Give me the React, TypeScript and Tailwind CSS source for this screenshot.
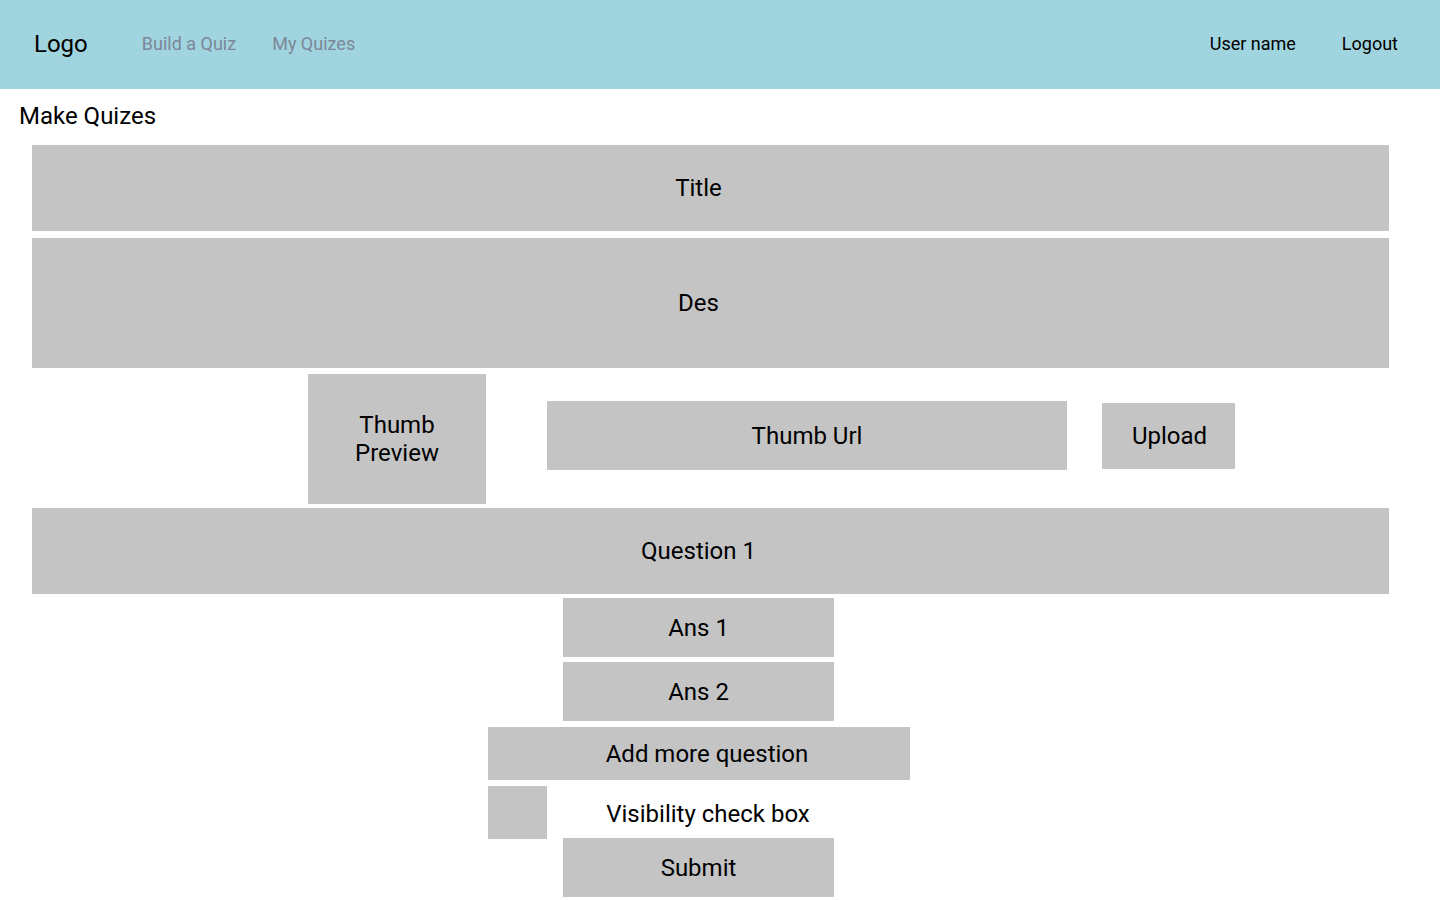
import React from "react"

const box = "bg-[#c4c4c4] flex items-center justify-center text-center text-black"

export default function App() {
  return (
    <div className="min-h-screen bg-white font-['Roboto',sans-serif] text-black">
      {/* Top bar */}
      <header className="h-[89px] bg-[#a0d4df] flex items-center px-[34px] pb-[2px]">
        <div className="text-[24px] leading-none">Logo</div>
        <nav className="flex items-center gap-[36px] ml-[54px] text-[18px] text-[#7c8797]">
          <a href="#">Build a Quiz</a>
          <a href="#">My Quizes</a>
        </nav>
        <div className="ml-auto flex items-center gap-[46px] text-[18px] pr-[8px]">
          <span>User name</span>
          <span>Logout</span>
        </div>
      </header>

      <main className="pb-4">
        <h1 className="pl-[19px] pt-[13px] text-[24px] leading-[28px]">Make Quizes</h1>

        <div className="ml-[32px] w-[1357px] mt-[15px] flex flex-col">
          <div className={`${box} h-[86px] pr-[24px] text-[24px]`}>Title</div>
          <div className={`${box} h-[130px] mt-[7px] pr-[24px] text-[24px]`}>Des</div>
        </div>

        {/* Thumbnail row */}
        <div className="flex items-start pl-[308px] mt-[6px]">
          <div className={`${box} w-[178px] h-[130px] text-[24px] leading-[28px]`}>
            Thumb
            <br />
            Preview
          </div>
          <div className={`${box} w-[520px] h-[69px] ml-[61px] mt-[27px] text-[24px]`}>Thumb Url</div>
          <div className={`${box} w-[133px] h-[66px] ml-[35px] mt-[29px] pl-[2px] text-[24px]`}>Upload</div>
        </div>

        <div className="ml-[32px] w-[1357px] mt-[4px]">
          <div className={`${box} h-[86px] pr-[24px] text-[24px]`}>Question 1</div>
        </div>

        <div className="flex flex-col mt-[4px]">
          <div className="pl-[563px]">
            <div className={`${box} w-[271px] h-[59px] text-[24px]`}>Ans 1</div>
          </div>
          <div className="pl-[563px] mt-[5px]">
            <div className={`${box} w-[271px] h-[59px] text-[24px]`}>Ans 2</div>
          </div>
          <div className="pl-[488px] mt-[6px]">
            <div className={`${box} w-[422px] h-[53px] pl-[16px] text-[24px]`}>Add more question</div>
          </div>
          <div className="pl-[488px] mt-[6px] flex items-center">
            <div className="bg-[#c4c4c4] w-[59px] h-[53px]" />
            <span className="w-[322px] text-center text-[24px] mt-[3px]">Visibility check box</span>
          </div>
          <div className="pl-[563px] -mt-[1px]">
            <div className={`${box} w-[271px] h-[59px] text-[24px]`}>Submit</div>
          </div>
        </div>
      </main>
    </div>
  )
}
